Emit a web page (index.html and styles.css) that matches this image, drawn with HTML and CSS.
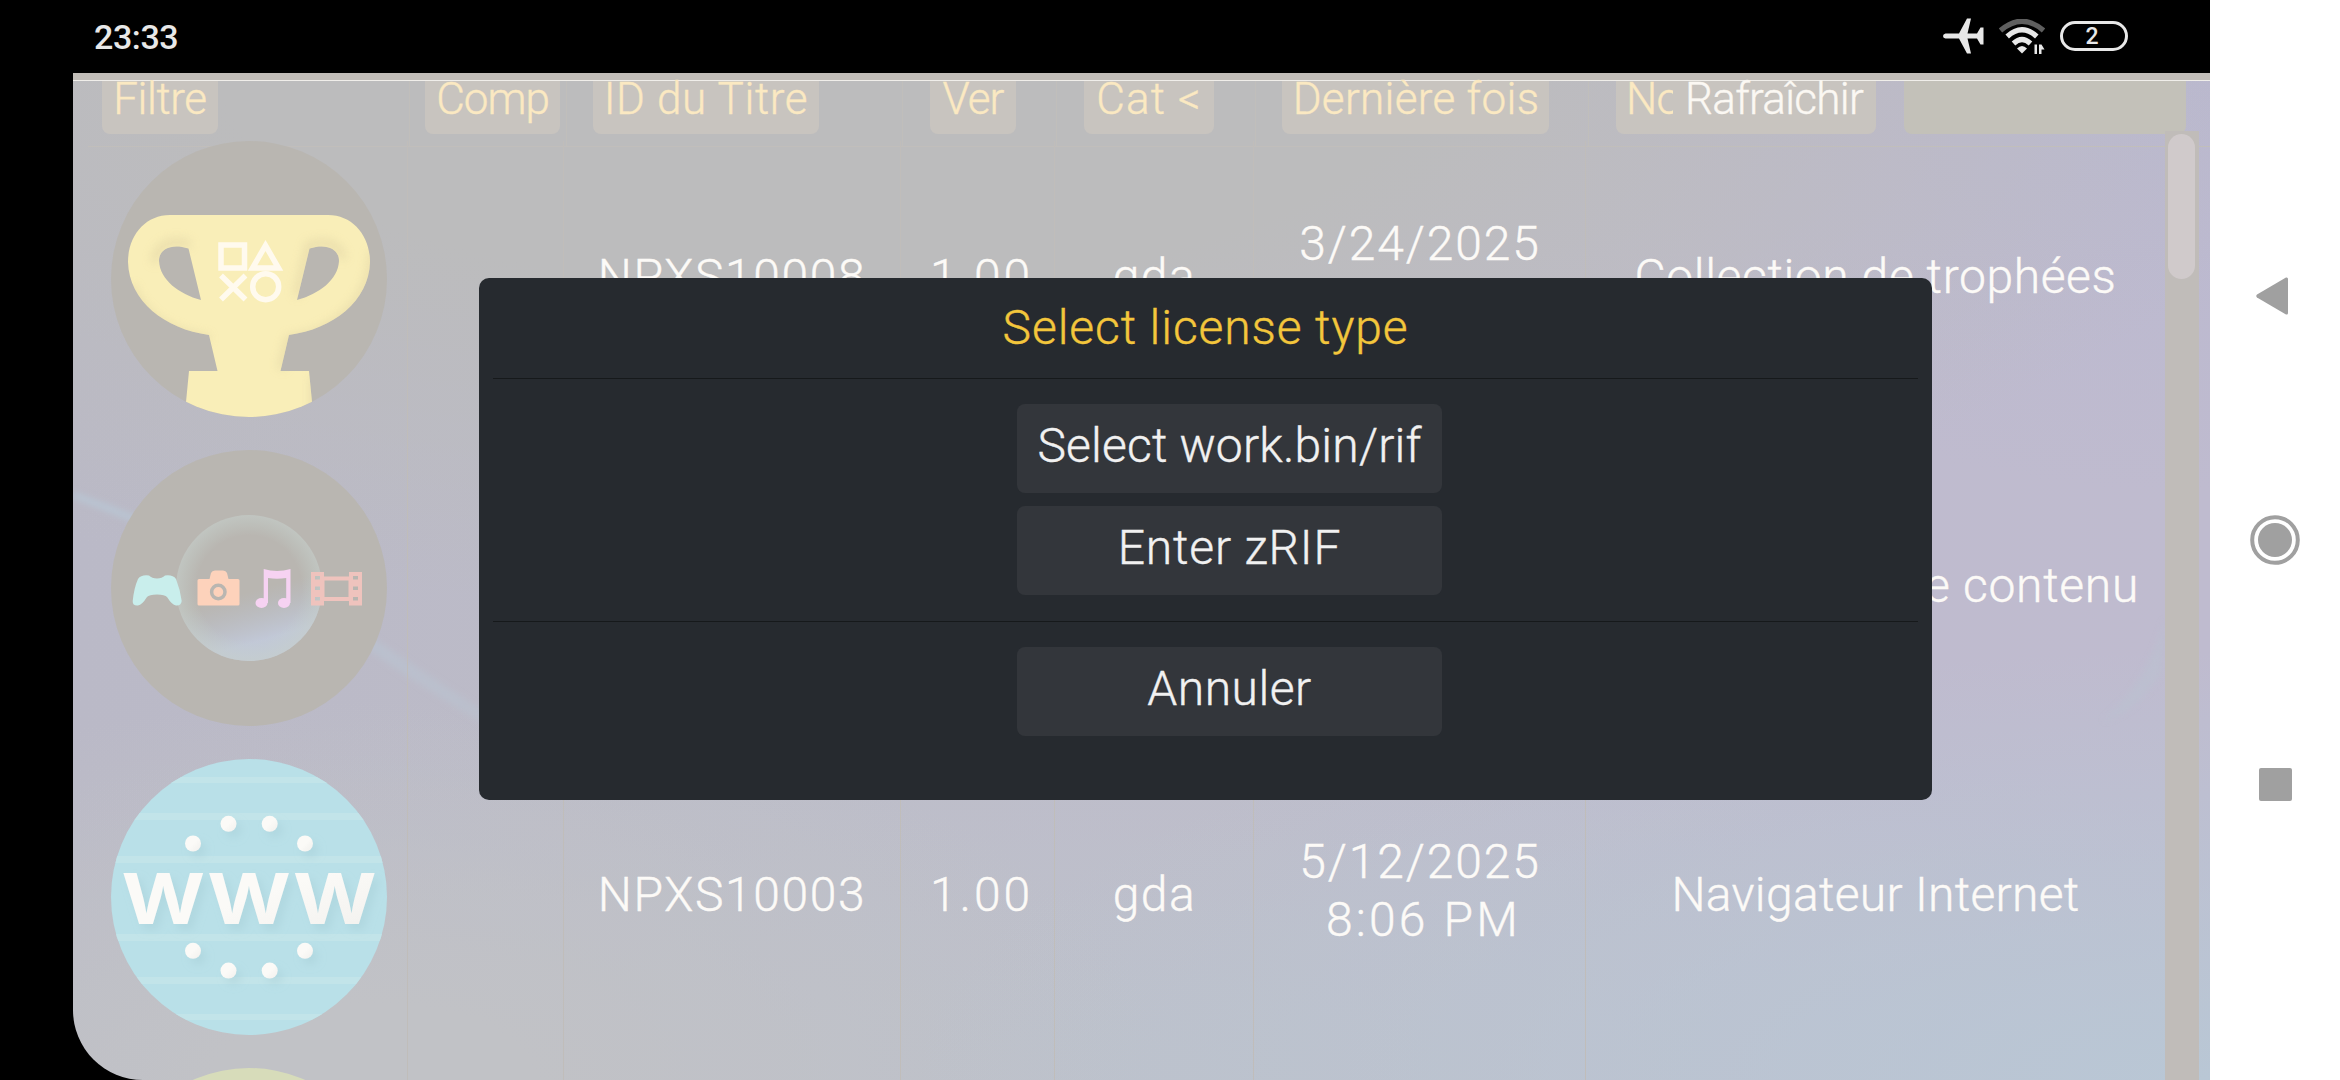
FILE: index.html
```
<!DOCTYPE html>
<html lang="fr">
<head>
<meta charset="utf-8">
<title>Select license type</title>
<link rel="stylesheet" href="styles.css">
</head>
<body>
<div class="screen">
  <div class="device">
    <div class="status">
      <span class="clock">23:33</span>
      <div class="status-icons">
        <svg class="plane" viewBox="0 0 41 36"><path d="M2.500 15.500H16L24 .500H28L24.500 15.500H34L37.500 9.500H40.500V26.500H37.500L34 20.500H24.500L28 35.500H24L16 20.500H2.500Q0 20 0 18T2.500 15.500Z"/></svg>
        <svg class="wifi" viewBox="0 0 46 36">
          <path d="M1.500 11.500Q23-7 44.500 11.500" class="wifi-dim"/>
          <path d="M8.200 17.500Q23 4 37.800 17.500M14.500 24.500Q23 16.500 31.500 24.500" class="wifi-arc"/>
          <path d="M18 29.500Q23 24.500 28 29.500L23 34.500Z" class="wifi-dot"/>
          <path d="M31 29.500L35.500 35V25.500H38V35H35.500ZM40 35V25.500H42.500L45.500 30.500H42.500V35Z" class="wifi-dot"/>
        </svg>
        <span class="battery">2</span>
      </div>
    </div>
    <div class="app">
      <svg class="wallpaper" viewBox="0 0 2137 1007" preserveAspectRatio="none">
        <defs>
          <linearGradient id="ray" x1="0" x2="1"><stop offset="0" stop-color="#b9c6d4"/><stop offset="1" stop-color="#bac3d0" stop-opacity=".35"/></linearGradient>
          <filter id="soft"><feGaussianBlur stdDeviation="3"/></filter>
        </defs>
        <path d="M0 419Q160 475 300 565Q410 640 520 705L510 705Q400 650 290 573Q150 482 0 425Z" fill="url(#ray)" filter="url(#soft)"/>
        <path d="M2092 545Q2075 610 2030 648Q2062 640 2088 600Z" fill="#bac2d0" opacity=".5" filter="url(#soft)"/>
      </svg>
      <div class="titlebar"></div>
      <div class="head">
        <div class="hcell"><span class="tag w-filtre">Filtre</span></div>
        <div class="hcell tight"><span class="tag w-comp">Comp</span></div>
        <div class="hcell"><span class="tag w-id">ID du Titre</span></div>
        <div class="hcell"><span class="tag w-ver">Ver</span></div>
        <div class="hcell"><span class="tag w-cat">Cat &lt;</span></div>
        <div class="hcell"><span class="tag w-date">Dernière fois</span></div>
        <div class="hcell last">
          <span class="tag w-name"><span class="cut">No</span><span class="refresh">Rafraîchir</span></span>
          <span class="tag search"></span>
        </div>
      </div>
      <div class="list">
        <div class="rows">
          <div class="row">
            <div class="cell icon">
              <svg viewBox="0 0 276 276">
                <defs>
                  <clipPath id="disc"><circle cx="138" cy="138" r="138"/></clipPath>
                  <filter id="bevel" x="-10%" y="-10%" width="120%" height="120%"><feGaussianBlur stdDeviation="5"/></filter>
                  <clipPath id="cup"><path clip-rule="evenodd" d="M59 74H217C242 74 259 95 259 121C258 160 222 188 178 194L169.500 230H198L201 261V280H75V261L78 230H106.500L98 194C54 188 18 160 17 121C17 95 34 74 59 74ZM77.500 107.500C60 102 48 108 48 120C49 139 68 153 90 159ZM198.500 107.500L186 159C208 153 227 139 228 120C228 108 216 102 198.500 107.500Z"/></clipPath>
                </defs>
                <circle cx="138" cy="138" r="138" fill="#b9b6b1"/>
                <g clip-path="url(#disc)"><g clip-path="url(#cup)">
                  <rect width="276" height="276" fill="#f9eeb8"/>
                  <g fill="none" stroke="#e2d6a6" stroke-width="7" opacity=".7" filter="url(#bevel)">
                    <path d="M261 110C262 160 222 192 178 198L170 228M98 198C54 192 30 172 20 145"/>
                    <path d="M79 104C58 96 44 106 44 122M186 155L198 104C216 98 229 104 232 118"/>
                    <path d="M203 235V270"/>
                  </g>
                </g></g>
                <g fill="none" stroke="#fffaee" stroke-width="5.500">
                  <rect x="110" y="104" width="23.500" height="23"/>
                  <path d="M154.500 104.500L167.500 127H141.500ZM110 134.500L134.500 158.500M134.500 134.500L110 158.500"/>
                  <circle cx="154.700" cy="145.700" r="13"/>
                </g>
              </svg>
            </div>
            <div class="cell"></div>
            <div class="cell"><span class="t-id">NPXS10008</span></div>
            <div class="cell"><span class="t-ver">1.00</span></div>
            <div class="cell"><span class="t-cat">gda</span></div>
            <div class="cell date"><span class="t-day">3/24/2025</span></div>
            <div class="cell name"><span class="t-trophy">Collection de trophées</span></div>
          </div>
          <div class="row">
            <div class="cell icon">
              <svg viewBox="0 0 276 276">
                <defs>
                  <radialGradient id="rim"><stop offset=".72" stop-color="#c4d2cc" stop-opacity="0"/><stop offset="1" stop-color="#c6cfcb" stop-opacity=".6"/></radialGradient>
                  <linearGradient id="glow" x1=".38" y1="0" x2=".66" y2="1"><stop offset=".52" stop-color="#bac0cd" stop-opacity="0"/><stop offset=".85" stop-color="#c2c9d9" stop-opacity=".95"/></linearGradient>
                </defs>
                <circle cx="138" cy="138" r="138" fill="#b9b6b1"/>
                <circle cx="138" cy="138" r="73" fill="url(#glow)"/>
                <circle cx="138" cy="138" r="73" fill="url(#rim)"/>
                <path fill="#c9eeec" d="M27 129Q30 124.500 38 125.500Q41 128.500 46 128.500T54 125.500Q62 124.500 65 129Q69 139 70.700 151Q70 156 65 155.500Q61 155 56 147Q54 144.500 46 144.500T36 147Q31 155 27 155.500Q21.500 156 21.700 151Q23 138 27 129Z"/>
                <path fill="#fdd2bb" d="M88 129H98.500L100 123Q101 120.500 104 120.500H112Q115 120.500 116 123L117.500 129H127Q128.500 129 128.500 130.500V154Q128.500 155.500 127 155.500H88Q86.500 155.500 86.500 154V130.500Q86.500 129 88 129Z"/>
                <circle cx="107.300" cy="142" r="6.700" fill="none" stroke="#b9b6b1" stroke-width="3.500"/>
                <g fill="#f6d2f2"><path d="M152.700 119Q166 123 179.500 119V153H175.200V128Q166 129.500 157 128V153H152.700Z"/><ellipse cx="150.500" cy="153" rx="6" ry="5"/><ellipse cx="173" cy="153" rx="6" ry="5"/></g>
                <g fill="#efc3bd"><path fill-rule="evenodd" d="M200 122H213V126.500H238V122H251V155.500H238V151H213V155.500H200ZM213.500 130.500V147H237.500V130.500ZM204 126V129.500H209V126ZM204 136.500V140H209V136.500ZM204 147V150.500H209V147ZM242 126V129.500H247V126ZM242 136.500V140H247V136.500ZM242 147V150.500H247V147Z"/></g>
              </svg>
            </div>
            <div class="cell"></div>
            <div class="cell"></div>
            <div class="cell"></div>
            <div class="cell"></div>
            <div class="cell date"></div>
            <div class="cell name"><span class="t-content">Gestionnaire de contenu</span></div>
          </div>
          <div class="row">
            <div class="cell icon">
              <svg viewBox="0 0 276 276">
                <defs>
                  <linearGradient id="ball" x1="0" y1="0" x2="1" y2="1"><stop offset=".5" stop-color="#fbfaf7"/><stop offset="1" stop-color="#f1f0ed"/></linearGradient>
                  <filter id="drop" x="-10%" y="-10%" width="125%" height="125%"><feDropShadow dx="5" dy="6" stdDeviation="4" flood-color="#9fc7d0" flood-opacity=".35"/></filter>
                </defs>
                <circle cx="138" cy="138" r="138" fill="#b9e0e8"/>
                <g clip-path="url(#disc)" fill="#c2e4e9"><rect y="18" width="276" height="6"/><rect y="54" width="276" height="7"/><rect y="97" width="276" height="7"/><rect y="175" width="276" height="7"/><rect y="218" width="276" height="7"/><rect y="255" width="276" height="6"/></g>
                <g filter="url(#drop)" fill="url(#ball)">
                  <circle cx="82" cy="84.500" r="8"/><circle cx="194" cy="84.500" r="8"/><circle cx="117.500" cy="64.800" r="8"/><circle cx="158.700" cy="64.800" r="8"/>
                  <circle cx="82" cy="191.800" r="8"/><circle cx="194" cy="191.800" r="8"/><circle cx="117.500" cy="211.600" r="8"/><circle cx="158.700" cy="211.600" r="8"/>
                  <text class="www" transform="translate(10.500 164.500) scale(1.150 1)">WWW</text>
                </g>
              </svg>
            </div>
            <div class="cell"></div>
            <div class="cell"><span class="t-id">NPXS10003</span></div>
            <div class="cell"><span class="t-ver">1.00</span></div>
            <div class="cell"><span class="t-cat">gda</span></div>
            <div class="cell date"><span class="t-day">5/12/2025</span><span class="t-hour">8:06 PM</span></div>
            <div class="cell name"><span class="t-web">Navigateur Internet</span></div>
          </div>
          <div class="row">
            <div class="cell icon"><svg viewBox="0 0 276 276"><circle cx="138" cy="138" r="138" fill="#d7dcba"/></svg></div>
            <div class="cell"></div><div class="cell"></div><div class="cell"></div><div class="cell"></div><div class="cell"></div><div class="cell name"></div>
          </div>
        </div>
        <div class="scroll"><div class="thumb"></div></div>
      </div>
      <div class="dialog">
        <div class="dialog-title">Select license type</div>
        <div class="choices">
          <div class="btn b-work">Select work.bin/rif</div>
          <div class="btn b-zrif">Enter zRIF</div>
        </div>
        <div class="choices"><div class="btn">Annuler</div></div>
      </div>
    </div>
  </div>
  <div class="nav">
    <svg viewBox="0 0 32 38"><path d="M1 17.500L30 .500Q32 0 32 2V36Q32 38 30 37.500L1 20.500Q-.500 19 1 17.500Z"/></svg>
    <svg class="home" viewBox="0 0 50 50"><circle cx="25" cy="25" r="22.800" fill="none" stroke="#a0a0a0" stroke-width="4"/><circle cx="25" cy="25" r="17"/></svg>
    <div class="recent"></div>
  </div>
</div>
</body>
</html>
```

FILE: styles.css
```
* { box-sizing: border-box; }
body {
  margin: 0;
  background: #000;
  font-family: Roboto, "Liberation Sans", sans-serif;
  font-weight: 300;
}
.screen { display: flex; width: 2340px; height: 1080px; overflow: hidden; }
.device { display: flex; flex-direction: column; width: 2210px; background: #000; }

.status {
  display: flex;
  flex: none;
  justify-content: space-between;
  height: 73px;
  padding: 0 82px 0 94px;
  color: #e8e8e8;
}
.clock { font-size: 34px; font-weight: 500; line-height: 74px; letter-spacing: -0.4px; }
.status-icons { display: flex; align-items: flex-start; padding-top: 18px; }
.plane { width: 41px; height: 36px; fill: #e8e8e8; }
.wifi { width: 46px; height: 36px; margin: 1px 15px 0; }
.wifi-arc, .wifi-dim { fill: none; stroke: #e8e8e8; stroke-width: 5.200; }
.wifi-dim { stroke: #5f5f5f; }
.wifi-dot { fill: #e8e8e8; }
.battery {
  width: 68px;
  height: 30px;
  margin-top: 3px;
  border: 3px solid #e8e8e8;
  border-radius: 15px;
  font-size: 23px;
  font-weight: 500;
  line-height: 26px;
  text-align: center;
  padding-right: 4px;
}

.app {
  position: relative;
  display: flex;
  flex-direction: column;
  flex: 1;
  min-height: 0;
  margin-left: 73px;
  overflow: hidden;
  border-bottom-left-radius: 70px;
  background:
    radial-gradient(ellipse 1300px 430px at 2137px 1007px, #b9c7d5 0%, rgba(186, 198, 213, 0) 100%),
    radial-gradient(ellipse 800px 380px at 300px 1007px, #c1c2c6 20%, rgba(193, 194, 198, 0) 100%),
    radial-gradient(ellipse 1400px 420px at 1000px 1007px, #bdc1cb 10%, rgba(189, 193, 203, 0) 100%),
    radial-gradient(ellipse 1500px 540px at 750px 0, #bcbcbd 40%, rgba(188, 188, 189, 0) 100%),
    radial-gradient(ellipse 700px 420px at 2137px 0, #bab8d0 0%, rgba(186, 184, 208, 0) 100%),
    linear-gradient(90deg, #bab9c7, #bdbcc8 35%, #bfbbce 80%, #bfbbcf);
}
.wallpaper { position: absolute; inset: 0; width: 100%; height: 100%; }
.titlebar { flex: none; height: 8px; background: #c1bdb8; border-bottom: 1px solid #f0eeea; }

.head {
  position: relative;
  display: grid;
  grid-template-columns: 337px 157px 336px 154px 199px 333px 1fr;
  flex: none;
  height: 60px;
  font-size: 44px;
  line-height: 37px;
  color: #fbe9c2;
  -webkit-text-stroke: 0.4px currentColor;
}
/* rule under the column titles, drawn across the first row */
.head::after { content: ""; position: absolute; left: 15px; right: 0; top: 65px; height: 1px; background: #c1bebb; }
.hcell { height: 65px; padding-left: 26px; border-right: 1px solid #c0bebb; white-space: nowrap; }
.hcell:first-child { padding-left: 29px; }
.hcell.tight { padding-left: 15px; }
.hcell.last { display: flex; gap: 28px; padding-left: 27px; border-right: 0; }
.tag { display: block; height: 53px; text-align: center; background: #c8c4bf; border-radius: 0 0 8px 8px; }
.w-filtre { width: 116px; letter-spacing: -0.4px; }
.w-comp { width: 135px; letter-spacing: -1px; }
.w-id { width: 226px; letter-spacing: 0.66px; }
.w-ver { width: 86px; margin-left: 1px; letter-spacing: -1px; }
.w-cat { width: 130px; margin-left: 1px; letter-spacing: 1.2px; }
.w-date { width: 267px; padding-left: 1px; letter-spacing: 0.31px; }
.w-name { display: flex; width: 260px; padding-left: 10px; letter-spacing: -0.69px; }
.cut { width: 47px; overflow: hidden; text-align: left; }
.refresh { margin-left: 12px; color: #fbf8f3; }
.search { width: 282px; background: #c3c1b9; }

.list { position: relative; display: flex; flex: 1; min-height: 0; }
.rows { flex: 1; }
.row {
  display: grid;
  grid-template-columns: 335px 156px 337px 154px 199px 332px 1fr;
  height: 309px;
  font-size: 48px;
  line-height: 58px;
  color: #fcfaf7;
  -webkit-text-stroke: 0.4px currentColor;
}
.cell {
  display: flex;
  flex-direction: column;
  align-items: center;
  justify-content: center;
  padding: 1px 0 39px;
  border-right: 1px solid #c0bdba;
  white-space: nowrap;
}
.cell.icon { align-items: flex-start; justify-content: flex-start; padding: 0 0 0 38px; }
.icon svg { width: 276px; height: 276px; }
.cell.date { justify-content: flex-start; padding: 74px 0 0; }
.cell.name { border-right: 0; }
.t-id { letter-spacing: 1.6px; }
.t-ver { padding-left: 8px; letter-spacing: 2.9px; }
.t-cat { padding-left: 1px; letter-spacing: 1.5px; }
.t-day { padding-left: 1px; letter-spacing: 1.9px; }
.t-hour { padding-left: 8px; letter-spacing: 3.2px; }
.t-trophy { letter-spacing: 0.6px; }
.t-content { letter-spacing: 0.7px; }
.t-web { letter-spacing: 0.3px; }
.www { font: 700 70px Inter, sans-serif; letter-spacing: 0.4px; -webkit-text-stroke: 0; }

.scroll { align-self: stretch; flex: none; width: 34px; margin: -10px 11px 0 0; padding: 3px 3px 0; background: #c0bcb9; z-index: 1; }
.thumb { width: 27px; height: 145px; border-radius: 14px; background: #d0cacb; }

.dialog {
  position: absolute;
  left: 406px;
  top: 205px;
  z-index: 2;
  width: 1453px;
  height: 522px;
  padding: 0 14px;
  border-radius: 10px;
  background: #262a2f;
  color: #f1f1f1;
  font-size: 48px;
  text-align: center;
  -webkit-text-stroke: 0.4px currentColor;
}
.dialog-title { height: 100px; line-height: 99px; letter-spacing: 0.89px; color: #f3c63c; }
.choices { display: flex; flex-direction: column; gap: 13px; padding: 25px 0 26px 524px; border-top: 1px solid #16191b; }
.btn { width: 425px; height: 89px; line-height: 84px; border-radius: 8px; background: #33363b; letter-spacing: 0.5px; }
.b-work { letter-spacing: 0.17px; }
.b-zrif { letter-spacing: 0.8px; }

.nav { display: flex; flex-direction: column; align-items: center; width: 130px; padding-top: 277px; background: #fff; fill: #a0a0a0; }
.nav svg { width: 32px; height: 38px; margin-right: 7px; }
.nav .home { width: 50px; height: 50px; margin: 200px 0 0; }
.recent { width: 33px; height: 33px; margin-top: 203px; border-radius: 2px; background: #a0a0a0; }
```
